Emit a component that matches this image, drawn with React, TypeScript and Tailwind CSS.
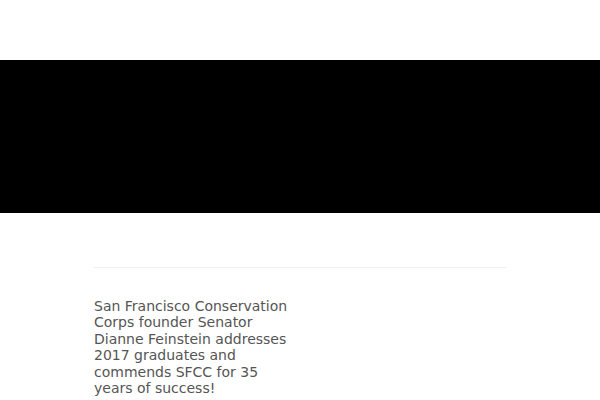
export default function App() {
  return (
    <div className="min-h-[400px] bg-white" style={{ fontFamily: '"DejaVu Sans", sans-serif' }}>
      <div className="h-[60px]" />
      <div className="h-[153px] bg-black" />
      <div className="mx-[94px] mt-[54px] border-t border-[#f0f0f0]" />
      <div className="mx-[94px] mt-[30px] w-[200px] text-[14px] leading-[16.4px] text-[#555]">
        San Francisco Conservation Corps founder Senator Dianne Feinstein addresses 2017 graduates and commends SFCC for 35 years of success!
      </div>
    </div>
  );
}
